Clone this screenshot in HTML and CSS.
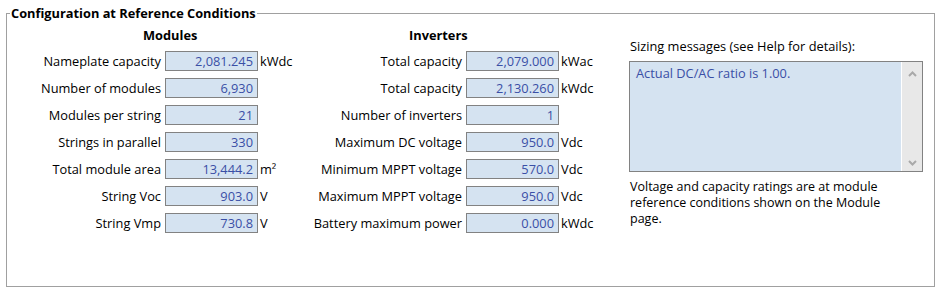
FILE: index.html
```html
<!DOCTYPE html>
<html lang="en">
<head>
  <meta charset="UTF-8">
  <title>Configuration at Reference Conditions</title>
  <link rel="stylesheet" href="styles.css">
</head>
<body>
  <fieldset class="group">
    <legend>Configuration at Reference Conditions</legend>
    <div class="layout">
      <section class="col col-modules">
        <h2 class="col-title">Modules</h2>
        <div class="fields">
          <span class="label">Nameplate capacity</span><span class="value">2,081.245</span><span class="unit">kWdc</span>
          <span class="label">Number of modules</span><span class="value">6,930</span><span class="unit"></span>
          <span class="label">Modules per string</span><span class="value">21</span><span class="unit"></span>
          <span class="label">Strings in parallel</span><span class="value">330</span><span class="unit"></span>
          <span class="label">Total module area</span><span class="value">13,444.2</span><span class="unit">m²</span>
          <span class="label">String Voc</span><span class="value">903.0</span><span class="unit">V</span>
          <span class="label">String Vmp</span><span class="value">730.8</span><span class="unit">V</span>
        </div>
      </section>

      <section class="col col-inverters">
        <h2 class="col-title">Inverters</h2>
        <div class="fields">
          <span class="label">Total capacity</span><span class="value">2,079.000</span><span class="unit">kWac</span>
          <span class="label">Total capacity</span><span class="value">2,130.260</span><span class="unit">kWdc</span>
          <span class="label">Number of inverters</span><span class="value">1</span><span class="unit"></span>
          <span class="label">Maximum DC voltage</span><span class="value">950.0</span><span class="unit">Vdc</span>
          <span class="label">Minimum MPPT voltage</span><span class="value">570.0</span><span class="unit">Vdc</span>
          <span class="label">Maximum MPPT voltage</span><span class="value">950.0</span><span class="unit">Vdc</span>
          <span class="label">Battery maximum power</span><span class="value">0.000</span><span class="unit">kWdc</span>
        </div>
      </section>

      <section class="messages">
        <div class="msg-label">Sizing messages (see Help for details):</div>
        <div class="msg-box">
          <div class="msg-text">Actual DC/AC ratio is 1.00.</div>
          <div class="scrollbar">
            <span class="arrow arrow-up">
              <svg width="9" height="6" viewBox="0 0 9 6"><polyline points="1,5 4.5,1.5 8,5" fill="none" stroke="#a9a9a9" stroke-width="2"/></svg>
            </span>
            <span class="arrow">
              <svg width="9" height="6" viewBox="0 0 9 6"><polyline points="1,1 4.5,4.5 8,1" fill="none" stroke="#a9a9a9" stroke-width="2"/></svg>
            </span>
          </div>
        </div>
        <p class="note">Voltage and capacity ratings are at module<br>reference conditions shown on the Module<br>page.</p>
      </section>
    </div>
  </fieldset>
</body>
</html>
```

FILE: styles.css
```css
html, body {
  height: 100%;
}
body {
  margin: 0;
  padding: 5px 6px 2px 6px;
  box-sizing: border-box;
  display: flex;
  font-family: "Open Sans", "Noto Sans", sans-serif;
  font-size: 12.8px;
  color: #000;
  background: #fff;
}
.group {
  flex: 1;
  min-width: 0;
  margin: 0;
  padding: 0;
  border: 1px solid #a0a0a0;
}
.group legend {
  margin-left: 3px;
  padding: 0 1px;
  font-weight: bold;
  line-height: 16px;
}
.layout {
  display: flex;
}
.col-modules {
  width: 300px;
}
.col-inverters {
  width: 322px;
}
.col-title {
  margin: 6px 0 8px;
  font-size: 12.8px;
  font-weight: bold;
  line-height: 16px;
}
.col-modules .col-title {
  padding-left: 136px;
}
.col-inverters .col-title {
  padding-left: 102px;
}
.fields {
  display: grid;
  grid-auto-rows: 20px;
  row-gap: 7px;
  align-items: center;
}
.col-modules .fields {
  grid-template-columns: 158px 93px 1fr;
}
.col-inverters .fields {
  grid-template-columns: 159px 93px 1fr;
}
.label {
  text-align: right;
  padding-right: 4px;
  white-space: nowrap;
}
.value {
  height: 20px;
  box-sizing: border-box;
  border: 1px solid #828282;
  background: #d5e3f1;
  color: #3a4fa6;
  text-align: right;
  padding-right: 4px;
  line-height: 18px;
}
.unit {
  padding-left: 2px;
  white-space: nowrap;
}
.messages {
  width: 294px;
  padding-top: 17px;
}
.msg-label {
  line-height: 16px;
  margin-bottom: 7px;
  padding-left: 1px;
}
.msg-box {
  height: 111px;
  box-sizing: border-box;
  border: 1px solid #828282;
  background: #d5e3f1;
  display: flex;
}
.msg-text {
  flex: 1;
  padding: 3px 6px;
  line-height: 16px;
  color: #3a4fa6;
}
.scrollbar {
  width: 20px;
  border-left: 1px solid #fff;
  background: #e8e8e8;
  display: flex;
  flex-direction: column;
  justify-content: space-between;
}
.arrow {
  height: 17px;
  display: flex;
  align-items: center;
  justify-content: center;
}
.arrow-up {
  margin-top: 3px;
}
.note {
  margin: 7px 0 0 1px;
  font-size: 12.5px;
  line-height: 16px;
}
```
